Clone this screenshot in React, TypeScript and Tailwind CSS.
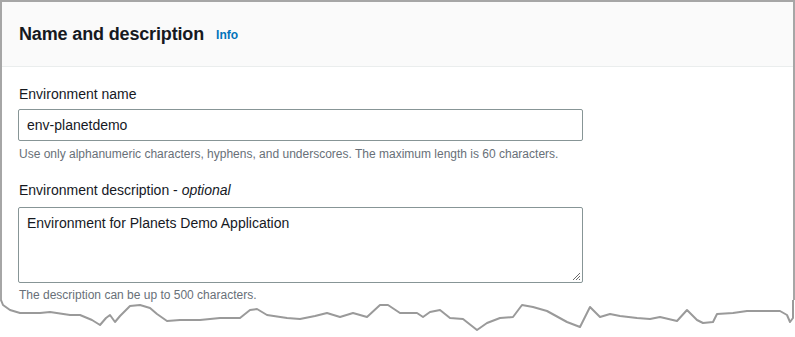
const tear =
  '3,305 10,310 20,313 40,313 50,312 70,315 80,315 92,320 100,325 106,318 110,315 115,322 120,316 130,306 140,305 150,308 157,314 167,321 180,320 200,320 ' +
  '220,318 240,318 250,310 257,309 267,315 287,318 300,319 315,316 327,313 340,317 353,313 367,317 380,305 388,305 400,313 ' +
  '417,313 423,317 430,312 440,310 450,318 463,319 477,330 487,323 500,318 513,317 522,305 533,307 547,311 567,322 580,327 590,307 600,317 ' +
  '610,314 620,316 637,318 650,319 660,317 677,321 687,310 697,320 703,323 713,322 717,314 733,313 747,311 767,311 780,311 787,315 790,322 793,318 793,300';

export default function App() {
  return (
    <div
      className="relative w-[795px] h-[337px] overflow-hidden bg-white text-[#16191f]"
      style={{ fontFamily: '"Liberation Sans", Arial, sans-serif' }}
    >
      <div className="h-[340px] border-l-2 border-t-2 border-r-2 border-[#a6a6a6] bg-white">
        <div className="h-[65px] bg-[#fafafa] border-b border-[#eaeded] flex items-center pl-[17px] pb-[1px]">
          <h2 className="text-[18px] font-bold leading-[22px] tracking-[-0.15px]">Name and description</h2>
          <a className="ml-[12px] text-[12px] font-bold text-[#0073bb] leading-[16px] mt-[3px]">Info</a>
        </div>

        <div className="pl-[16px] pt-[17px] flex flex-col">
          <label className="text-[14px] leading-[20px] pl-[1px]">Environment name</label>
          <div className="mt-[5px] w-[565px] h-[32px] border border-[#879596] rounded-[2px] flex items-center px-[8px] text-[14px]">
            env-planetdemo
          </div>
          <p className="mt-[5px] text-[12px] leading-[16px] text-[#687078] pl-[1px]">
            Use only alphanumeric characters, hyphens, and underscores. The maximum length is 60 characters.
          </p>

          <label className="mt-[18px] text-[14px] leading-[20px] pl-[1px]">
            Environment description - <i>optional</i>
          </label>
          <div className="relative mt-[7px] w-[565px] h-[76px] border border-[#879596] rounded-[2px] px-[8px] pt-[5px] text-[14px] leading-[20px]">
            Environment for Planets Demo Application
            <svg className="absolute right-[1px] bottom-[1px]" width="10" height="10" viewBox="0 0 10 10">
              <path d="M9 2 L2 9 M9 5 L5 9 M9 8 L8 9" stroke="#6b6b6b" strokeWidth="1" />
            </svg>
          </div>
          <p className="mt-[4px] text-[12px] leading-[16px] text-[#687078] pl-[1px]">
            The description can be up to 500 characters.
          </p>
        </div>
      </div>

      <svg className="absolute left-0 top-0" width="795" height="337" viewBox="0 0 795 337">
        <polygon points={`0,300 ${tear} 795,300 795,337 0,337`} fill="white" />
        <polyline points={`1,300 ${tear}`} fill="none" stroke="#9a9a9a" strokeWidth="2" strokeLinejoin="round" />
      </svg>
    </div>
  );
}
